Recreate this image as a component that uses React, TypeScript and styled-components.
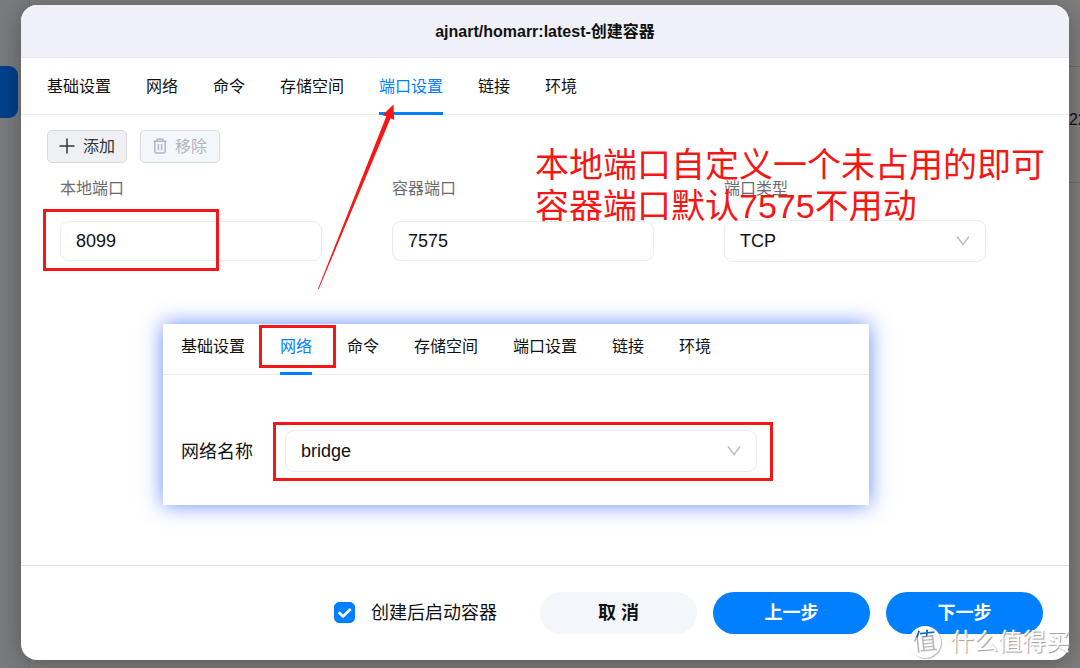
import React, { useState } from "react";
import styled, { createGlobalStyle } from "styled-components";

const sans = `"Liberation Sans", "Noto Sans CJK SC", sans-serif`;
const red = "#f51616";
const blue = "#0080ff";

const GlobalStyle = createGlobalStyle`
  *, *::before, *::after { box-sizing: border-box; }
  body { margin: 0; font-family: ${sans}; font-size: 16px; line-height: 24px; color: #111; }
  button, input, select { font-family: inherit; line-height: inherit; color: inherit; margin: 0; }
`;

const Page = styled.div`
  position: relative;
  display: flex;
  min-height: 100vh;
  padding: 5px 11px 8px 21px;
  background: #7e7e7e;
  overflow: hidden;
`;

const Backdrop = styled.div`
  position: absolute;
  inset: 0;
  display: flex;
  justify-content: space-between;
`;

const BackdropNav = styled.div`
  width: 30px;
  padding-top: 66px;
  background: #7a7b7d;
  border-right: 1px solid #727272;
`;

const BackdropItem = styled.div`
  width: 18px;
  height: 52px;
  border-radius: 0 9px 9px 0;
  background: #00408a;
`;

const BackdropTable = styled.div`
  width: 11px;
  padding-top: 66px;
`;

const BackdropCell = styled.div`
  height: 117px;
  padding-top: 41px;
  overflow: hidden;
  white-space: nowrap;
  border: solid #6c6c6c;
  border-width: 1px 0;
`;

const Dialog = styled.main`
  position: relative;
  flex: 1;
  min-width: 0;
  display: flex;
  flex-direction: column;
  border-radius: 16px;
  background: #fff;
  box-shadow: 0 4px 24px rgba(0, 0, 0, 0.3);
`;

const Header = styled.header`
  display: flex;
  align-items: center;
  justify-content: center;
  height: 53px;
  padding-top: 2px;
  border-bottom: 1px solid #e6e7ec;
  border-radius: 16px 16px 0 0;
  background: #f0f1f8;
`;

const Title = styled.h1`
  margin: 0;
  font-size: 16px;
  line-height: 24px;
  font-weight: 700;
`;

const TabBar = styled.nav<{ $compact?: boolean }>`
  display: flex;
  gap: 35px;
  height: ${(p) => (p.$compact ? 51 : 57)}px;
  padding: 0 ${(p) => (p.$compact ? 18 : 26)}px;
  border-bottom: 1px solid #ececec;
`;

const Tab = styled.button<{ $active: boolean; $compact?: boolean }>`
  position: relative;
  padding: ${(p) => (p.$compact ? "0 0 4px" : "2px 0 0")};
  border: 0;
  background: none;
  font-size: 16px;
  white-space: nowrap;
  color: ${(p) => (p.$active ? blue : "#111")};

  &::after {
    content: "";
    position: absolute;
    inset: auto 0 -1px;
    height: 3px;
    background: ${(p) => (p.$active ? blue : "transparent")};
  }
`;

const Body = styled.section`
  flex: 1;
  padding-bottom: 59px;
`;

const Toolbar = styled.div`
  display: flex;
  gap: 13px;
  padding: 15px 26px 0;
`;

const ToolButton = styled.button`
  display: flex;
  align-items: center;
  justify-content: center;
  gap: 8px;
  width: 80px;
  height: 33px;
  padding: 0;
  border: 1px solid #d8d9dc;
  border-radius: 5px;
  background: #eff0f4;
  font-size: 16px;
  color: #333;

  svg {
    margin-bottom: 2px;
  }
  &:disabled {
    background: #f4f8fc;
    color: #b0b4c8;
  }
`;

const PortRow = styled.div`
  display: grid;
  grid-template-columns: repeat(3, 1fr);
  column-gap: 70px;
  padding: 14px 83px 0 39px;
`;

const Field = styled.div`
  position: relative;
  display: flex;
  flex-direction: column;
  gap: 20px;
`;

const FieldLabel = styled.label`
  font-size: 16px;
  line-height: 24px;
  color: #6c6c6c;
`;

const TextInput = styled.input`
  width: 100%;
  height: 40px;
  padding: 0 15px;
  border: 1px solid #ebebeb;
  border-radius: 9px;
  background: #fff;
  font-size: 18px;
`;

const SelectBox = styled.div`
  position: relative;
  flex: 1;
  margin-top: -1px;

  svg {
    position: absolute;
    right: 16px;
    top: 15px;
    pointer-events: none;
  }
`;

const SelectInput = styled.select`
  display: block;
  width: 100%;
  height: 42px;
  padding: 0 15px;
  border: 1px solid #ebebeb;
  border-radius: 9px;
  appearance: none;
  background: #fff;
  font-size: 18px;
`;

const Mark = styled.span`
  position: absolute;
  border: 3px solid ${red};
  pointer-events: none;
`;

const PortMark = styled(Mark)`
  left: -17px;
  top: 32px;
  width: 176px;
  height: 62px;
`;

const TabMark = styled(Mark)`
  inset: 1px -24px 6px -21px;
`;

const SelectMark = styled(Mark)`
  inset: -8px -16px -9px -12px;
`;

const NetworkPanel = styled.section`
  margin: 62px 200px 0 142px;
  padding-bottom: 33px;
  background: #fff;
  box-shadow: 0 0 20px rgba(50, 100, 255, 0.75);
`;

const NetworkRow = styled.div`
  display: flex;
  align-items: center;
  gap: 32px;
  padding: 56px 112px 0 18px;
`;

const NetworkLabel = styled.label`
  font-size: 18px;
  line-height: 24px;
`;

const Footer = styled.footer`
  display: flex;
  align-items: center;
  justify-content: flex-end;
  gap: 16px;
  height: 95px;
  padding: 0 26px;
  border-top: 1px solid #dfdfdf;
`;

const StartOption = styled.label`
  display: flex;
  align-items: center;
  gap: 16px;
  margin-right: 27px;
  font-size: 18px;
`;

const CheckBox = styled.span`
  position: relative;
  display: flex;
  margin-bottom: 2px;

  input {
    appearance: none;
    width: 21px;
    height: 21px;
    border: 1px solid ${blue};
    border-radius: 5px;
    background: #fff;
  }
  input:checked {
    background: ${blue};
  }
  svg {
    position: absolute;
    inset: 0;
    pointer-events: none;
  }
`;

const PillButton = styled.button<{ $primary?: boolean }>`
  width: 157px;
  height: 42px;
  padding: 0;
  border: 0;
  border-radius: 21px;
  font-size: 18px;
  font-weight: 700;
  background: ${(p) => (p.$primary ? blue : "#f3f7fb")};
  color: ${(p) => (p.$primary ? "#fff" : "#111")};
`;

const Note = styled.p`
  position: absolute;
  left: 514px;
  top: 140px;
  margin: 0;
  font-size: 34px;
  line-height: 41px;
  white-space: nowrap;
  color: ${red};
`;

const Arrow = styled.svg`
  position: absolute;
  left: 289px;
  top: 95px;
  pointer-events: none;
`;

const Watermark = styled.div`
  position: absolute;
  right: 10px;
  bottom: 8px;
  display: flex;
  align-items: center;
  gap: 9px;
  font-size: 24px;
  line-height: 36px;
  white-space: nowrap;
  color: #fff;
  text-shadow: 1px 1px 1px #999;
`;

const WatermarkBadge = styled.span`
  display: flex;
  align-items: center;
  justify-content: center;
  width: 32px;
  height: 32px;
  border-radius: 50%;
  background: #fff;
  box-shadow: 1px 1px 1px #bbb;
  text-shadow: none;

  span {
    background: linear-gradient(#1464b4 34%, #b8b8b8 36%);
    background-clip: text;
    color: transparent;
    transform: rotate(-6deg);
  }
`;

const Chevron = () => (
  <svg width="14" height="12" viewBox="0 0 14 12" fill="none" stroke="#bcbcbc" strokeWidth="1.4">
    <path d="M1 1.500 7 9.500 13 1.500" />
  </svg>
);

const PlusIcon = () => (
  <svg width="16" height="16" viewBox="0 0 16 16" fill="none" stroke="#333" strokeWidth="1.500">
    <path d="M8 .5v15M.5 8h15" />
  </svg>
);

const TrashIcon = () => (
  <svg width="14" height="16" viewBox="0 0 14 16" fill="none" stroke="currentColor" strokeWidth="1.500">
    <path d="M.5 3.300h13M3.700 3.300 4.400 1h5.200l.7 2.300M1.800 3.300v10.200c0 1 .6 1.600 1.600 1.600h7.200c1 0 1.600-.6 1.600-1.600V3.300M5.400 6v6.300M8.600 6v6.300" />
  </svg>
);

const tabs = ["基础设置", "网络", "命令", "存储空间", "端口设置", "链接", "环境"];

export default function App() {
  const [start, setStart] = useState(true);
  return (
    <>
      <GlobalStyle />
      <Page>
        <Backdrop aria-hidden="true">
          <BackdropNav>
            <BackdropItem />
          </BackdropNav>
          <BackdropTable>
            <BackdropCell>22</BackdropCell>
          </BackdropTable>
        </Backdrop>
        <Dialog>
          <Header>
            <Title>ajnart/homarr:latest-创建容器</Title>
          </Header>
          <TabBar>
            {tabs.map((t) => (
              <Tab key={t} $active={t === "端口设置"}>
                {t}
              </Tab>
            ))}
          </TabBar>
          <Body>
            <Toolbar>
              <ToolButton>
                <PlusIcon />
                添加
              </ToolButton>
              <ToolButton disabled>
                <TrashIcon />
                移除
              </ToolButton>
            </Toolbar>
            <PortRow>
              <Field>
                <FieldLabel htmlFor="local">本地端口</FieldLabel>
                <TextInput id="local" defaultValue="8099" />
                <PortMark />
              </Field>
              <Field>
                <FieldLabel htmlFor="container">容器端口</FieldLabel>
                <TextInput id="container" defaultValue="7575" />
              </Field>
              <Field>
                <FieldLabel htmlFor="type">端口类型</FieldLabel>
                <SelectBox>
                  <SelectInput id="type" defaultValue="TCP">
                    <option>TCP</option>
                    <option>UDP</option>
                  </SelectInput>
                  <Chevron />
                </SelectBox>
              </Field>
            </PortRow>
            <NetworkPanel>
              <TabBar $compact>
                {tabs.map((t) => (
                  <Tab key={t} $compact $active={t === "网络"}>
                    {t}
                    {t === "网络" && <TabMark />}
                  </Tab>
                ))}
              </TabBar>
              <NetworkRow>
                <NetworkLabel htmlFor="network">网络名称</NetworkLabel>
                <SelectBox>
                  <SelectInput id="network" defaultValue="bridge">
                    <option>bridge</option>
                    <option>host</option>
                  </SelectInput>
                  <Chevron />
                  <SelectMark />
                </SelectBox>
              </NetworkRow>
            </NetworkPanel>
          </Body>
          <Footer>
            <StartOption>
              <CheckBox>
                <input type="checkbox" checked={start} onChange={(e) => setStart(e.target.checked)} />
                <svg width="21" height="21" viewBox="0 0 21 21" fill="none" stroke="#fff" strokeWidth="2.6">
                  <path d="M4.700 10.300 9 14.500 16.700 7" />
                </svg>
              </CheckBox>
              创建后启动容器
            </StartOption>
            <PillButton>取 消</PillButton>
            <PillButton $primary>上一步</PillButton>
            <PillButton $primary>下一步</PillButton>
          </Footer>
          <Note>
            本地端口自定义一个未占用的即可
            <br />
            容器端口默认7575不用动
          </Note>
          <Arrow width="90" height="190" viewBox="310 100 90 190" fill={red}>
            <path d="M393.500 104.500 394.200 120 390.600 118.200 318.800 289 318 288.700 386.300 116.300 382.500 115.200Z" />
          </Arrow>
        </Dialog>
        <Watermark>
          <WatermarkBadge>
            <span>值</span>
          </WatermarkBadge>
          什么值得买
        </Watermark>
      </Page>
    </>
  );
}
